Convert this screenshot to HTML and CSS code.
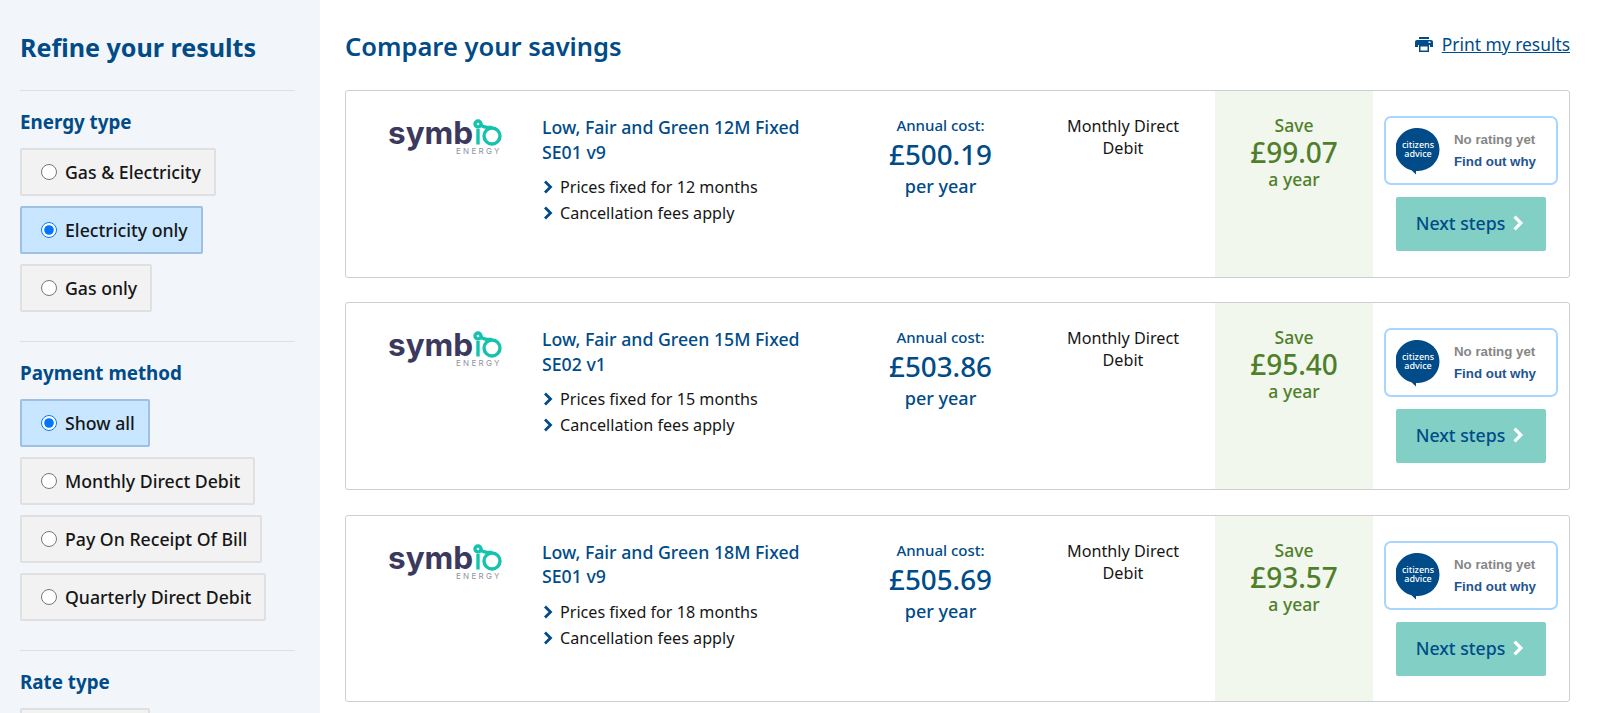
FILE: index.html
```html
<!DOCTYPE html>
<html lang="en">
<head>
<meta charset="utf-8">
<title>Compare your savings</title>
<link rel="stylesheet" href="styles.css">
</head>
<body>
<div class="page">
  <aside class="sidebar">
    <h2 class="side-title">Refine your results</h2>
    <section class="group">
      <h3 class="group-title">Energy type</h3>
      <label class="opt"><input type="radio" name="e">Gas &amp; Electricity</label>
      <label class="opt on"><input type="radio" name="e" checked>Electricity only</label>
      <label class="opt"><input type="radio" name="e">Gas only</label>
    </section>
    <section class="group">
      <h3 class="group-title">Payment method</h3>
      <label class="opt on"><input type="radio" name="p" checked>Show all</label>
      <label class="opt"><input type="radio" name="p">Monthly Direct Debit</label>
      <label class="opt"><input type="radio" name="p">Pay On Receipt Of Bill</label>
      <label class="opt"><input type="radio" name="p">Quarterly Direct Debit</label>
    </section>
    <section class="group">
      <h3 class="group-title">Rate type</h3>
      <div class="opt-stub"></div>
    </section>
  </aside>
  <main class="main">
    <header class="head">
      <h1 class="title">Compare your savings</h1>
      <a class="print" href="#">
        <svg class="print-icon" viewBox="0 0 18 15" aria-hidden="true"><path fill="#004b88" d="M4 0h10v2H4zM2 3h14a2 2 0 0 1 2 2v5h-3V8H3v2H0V5a2 2 0 0 1 2-2z"/><path fill="#fff" d="M13.500 4.500h2v1.500h-2z"/><path fill="none" stroke="#004b88" stroke-width="1.500" d="M4.750 8.750h8.500v5.500h-8.500z"/></svg>
        <span class="print-text">Print my results</span>
      </a>
    </header>

    <article class="card">
      <div class="c-logo"><svg class="logo" viewBox="0 0 114 38"><text class="logo-main" x="0" y="25">symb</text><path d="M90 25.500V10" class="logo-curl"/><circle cx="90" cy="5" r="3" class="logo-curl"/><path d="M93 6C96 9 100 8.500 104 8.500" class="logo-curl"/><circle cx="104" cy="17" r="8" class="logo-curl"/><text class="logo-sub" x="68" y="35">ENERGY</text></svg></div>
      <div class="c-plan">
        <h4 class="plan-name">Low, Fair and Green 12M Fixed<br>SE01 v9</h4>
        <ul class="feats">
          <li><svg class="chev" viewBox="0 0 10 14"><path d="M2 1.500 7.500 7 2 12.500"/></svg>Prices fixed for 12 months</li>
          <li><svg class="chev" viewBox="0 0 10 14"><path d="M2 1.500 7.500 7 2 12.500"/></svg>Cancellation fees apply</li>
        </ul>
      </div>
      <div class="c-cost"><div class="small">Annual cost:</div><div class="price">£500.19</div><div class="per">per year</div></div>
      <div class="c-pay">Monthly Direct<br>Debit</div>
      <div class="c-save"><div class="save-l">Save</div><div class="save-v">£99.07</div><div class="save-l">a year</div></div>
      <div class="c-act">
        <a class="rating" href="#"><svg class="ca" viewBox="0 0 44 47"><path d="M22 0a21.500 21.500 0 1 1 0 43h-2v3.500l-4.500-4.200A21.500 21.500 0 0 1 22 0z"/><text class="ca-text" text-anchor="middle"><tspan x="22" y="20">citizens</tspan><tspan x="22" y="29">advice</tspan></text></svg><span class="rating-text"><span class="r-no">No rating yet</span><span class="r-why">Find out why</span></span></a>
        <a class="next" href="#">Next steps<svg class="next-chev" viewBox="0 0 10 14"><path d="M2 1.500 7.500 7 2 12.500"/></svg></a>
      </div>
    </article>

    <article class="card">
      <div class="c-logo"><svg class="logo" viewBox="0 0 114 38"><text class="logo-main" x="0" y="25">symb</text><path d="M90 25.500V10" class="logo-curl"/><circle cx="90" cy="5" r="3" class="logo-curl"/><path d="M93 6C96 9 100 8.500 104 8.500" class="logo-curl"/><circle cx="104" cy="17" r="8" class="logo-curl"/><text class="logo-sub" x="68" y="35">ENERGY</text></svg></div>
      <div class="c-plan">
        <h4 class="plan-name">Low, Fair and Green 15M Fixed<br>SE02 v1</h4>
        <ul class="feats">
          <li><svg class="chev" viewBox="0 0 10 14"><path d="M2 1.500 7.500 7 2 12.500"/></svg>Prices fixed for 15 months</li>
          <li><svg class="chev" viewBox="0 0 10 14"><path d="M2 1.500 7.500 7 2 12.500"/></svg>Cancellation fees apply</li>
        </ul>
      </div>
      <div class="c-cost"><div class="small">Annual cost:</div><div class="price">£503.86</div><div class="per">per year</div></div>
      <div class="c-pay">Monthly Direct<br>Debit</div>
      <div class="c-save"><div class="save-l">Save</div><div class="save-v">£95.40</div><div class="save-l">a year</div></div>
      <div class="c-act">
        <a class="rating" href="#"><svg class="ca" viewBox="0 0 44 47"><path d="M22 0a21.500 21.500 0 1 1 0 43h-2v3.500l-4.500-4.200A21.500 21.500 0 0 1 22 0z"/><text class="ca-text" text-anchor="middle"><tspan x="22" y="20">citizens</tspan><tspan x="22" y="29">advice</tspan></text></svg><span class="rating-text"><span class="r-no">No rating yet</span><span class="r-why">Find out why</span></span></a>
        <a class="next" href="#">Next steps<svg class="next-chev" viewBox="0 0 10 14"><path d="M2 1.500 7.500 7 2 12.500"/></svg></a>
      </div>
    </article>

    <article class="card">
      <div class="c-logo"><svg class="logo" viewBox="0 0 114 38"><text class="logo-main" x="0" y="25">symb</text><path d="M90 25.500V10" class="logo-curl"/><circle cx="90" cy="5" r="3" class="logo-curl"/><path d="M93 6C96 9 100 8.500 104 8.500" class="logo-curl"/><circle cx="104" cy="17" r="8" class="logo-curl"/><text class="logo-sub" x="68" y="35">ENERGY</text></svg></div>
      <div class="c-plan">
        <h4 class="plan-name">Low, Fair and Green 18M Fixed<br>SE01 v9</h4>
        <ul class="feats">
          <li><svg class="chev" viewBox="0 0 10 14"><path d="M2 1.500 7.500 7 2 12.500"/></svg>Prices fixed for 18 months</li>
          <li><svg class="chev" viewBox="0 0 10 14"><path d="M2 1.500 7.500 7 2 12.500"/></svg>Cancellation fees apply</li>
        </ul>
      </div>
      <div class="c-cost"><div class="small">Annual cost:</div><div class="price">£505.69</div><div class="per">per year</div></div>
      <div class="c-pay">Monthly Direct<br>Debit</div>
      <div class="c-save"><div class="save-l">Save</div><div class="save-v">£93.57</div><div class="save-l">a year</div></div>
      <div class="c-act">
        <a class="rating" href="#"><svg class="ca" viewBox="0 0 44 47"><path d="M22 0a21.500 21.500 0 1 1 0 43h-2v3.500l-4.500-4.200A21.500 21.500 0 0 1 22 0z"/><text class="ca-text" text-anchor="middle"><tspan x="22" y="20">citizens</tspan><tspan x="22" y="29">advice</tspan></text></svg><span class="rating-text"><span class="r-no">No rating yet</span><span class="r-why">Find out why</span></span></a>
        <a class="next" href="#">Next steps<svg class="next-chev" viewBox="0 0 10 14"><path d="M2 1.500 7.500 7 2 12.500"/></svg></a>
      </div>
    </article>
  </main>
</div>
</body>
</html>
```
FILE: styles.css
```css
* { box-sizing: border-box; }
html, body { margin: 0; height: 713px; overflow: hidden; }
body { font-family: "Noto Sans", "Open Sans", sans-serif; font-size: 16px; color: #161616; background: #fff; }

.page { display: flex; height: 713px; }

.sidebar { width: 320px; flex: none; background: #f2f5f9; padding: 0 25px 0 20px; overflow: hidden; }
.side-title { margin: 0; padding: 29px 0 25px; font-size: 25.100px; line-height: 36px; font-weight: 700; color: #004b88; }
.group { border-top: 1px solid #dcdfe3; padding: 18px 0 19px; }
.group-title { margin: 0 0 13px; font-size: 18.800px; line-height: 26px; font-weight: 700; color: #004b88; }
.opt { display: flex; width: fit-content; height: 48px; align-items: center; margin-bottom: 10px; padding: 0 13px 0 19px; background: #f2f2f2; border: 2px solid #e0e0e0; border-radius: 2px; font-size: 17.700px; font-weight: 500; line-height: 24px; }
.opt input { width: 16px; height: 16px; margin: 0 8px 0 0; }
.opt.on { background: #c8e6ff; border-color: #9fbfe3; }
.opt-stub { width: 130px; height: 48px; background: #f2f2f2; border: 2px solid #e0e0e0; border-radius: 2px; }

.main { flex: 1; padding: 0 35px 0 25px; min-width: 0; }
.head { display: flex; justify-content: space-between; align-items: flex-start; height: 90px; }
.title { margin: 28px 0 0; font-size: 25.500px; line-height: 36px; font-weight: 600; color: #004b88; }
.print { display: flex; align-items: center; margin-top: 32px; color: #004b88; text-decoration: none; }
.print-icon { width: 18px; height: 15px; margin-right: 9px; }
.print-text { font-size: 17.400px; line-height: 24px; text-decoration: underline; }

.card { display: flex; height: 187.600px; margin-bottom: 24.800px; border: 1px solid #cfcfcf; border-radius: 3px; }
.c-logo { width: 196px; flex: none; padding: 28px 0 0 42px; }
.logo { display: block; width: 114px; height: 38px; overflow: visible; }
.logo-main { font-family: "Inter", sans-serif; font-weight: 700; font-size: 31.500px; fill: #3b3a5e; }
.logo-sub { font-family: "Inter", sans-serif; font-size: 8px; letter-spacing: 2.300px; fill: #8f93a0; }
.logo-curl { fill: none; stroke: #14c3ae; stroke-width: 3.400; }
.c-plan { width: 309px; flex: none; padding: 24px 0 0 0; }
.plan-name { margin: 0; font-size: 17.700px; line-height: 24.500px; font-weight: 500; color: #004b88; }
.feats { list-style: none; margin: 10px 0 0; padding: 0 0 0 1px; }
.feats li { display: flex; align-items: center; height: 26px; font-size: 16.150px; color: #161616; }
.chev { width: 10px; height: 14px; margin-right: 7px; flex: none; }
.chev path { fill: none; stroke: #004b88; stroke-width: 2.800; }
.c-cost { width: 180px; flex: none; padding: 24px 1px 0 0; text-align: center; color: #004b88; font-weight: 500; }
.small { font-size: 15px; line-height: 20px; }
.price { font-size: 27.800px; line-height: 39px; }
.per { font-size: 18px; line-height: 24px; }
.c-pay { width: 184px; flex: none; padding-top: 24px; text-align: center; font-size: 16.200px; line-height: 22px; }
.c-save { width: 158px; flex: none; padding-top: 22px; background: #f1f7ec; text-align: center; color: #4f7f2b; font-weight: 500; }
.save-l { font-size: 17.500px; line-height: 24px; }
.save-v { font-size: 28px; line-height: 30px; }
.c-act { flex: 1; display: flex; flex-direction: column; align-items: center; padding: 25px 0 0 0; }
.rating { display: flex; align-items: center; width: 174px; height: 69px; padding: 0 0 0 10px; background: #fff; border: 2px solid #a9d6ff; border-radius: 7px; text-decoration: none; font-family: "Liberation Sans", Arial, sans-serif; font-weight: 700; font-size: 13.300px; }
.ca { width: 44px; height: 47px; margin: 2px 14px 0 0; flex: none; }
.ca path { fill: #004b88; }
.ca-text { font-family: "Noto Sans", sans-serif; font-size: 9px; font-weight: 500; fill: #fff; }
.rating-text { display: flex; flex-direction: column; gap: 7px; line-height: 15px; }
.r-no { color: #868686; }
.r-why { color: #22558f; }
.next { display: flex; align-items: center; justify-content: center; width: 150px; height: 54px; margin: 12px 0 0 0; padding: 0 2px 2px 0; background: #81cfc5; border-radius: 2px; color: #004b88; font-size: 17.700px; font-weight: 500; text-decoration: none; }
.next-chev { width: 12px; height: 16px; margin-left: 7px; }
.next-chev path { fill: none; stroke: #fff; stroke-width: 2.800; }
```
